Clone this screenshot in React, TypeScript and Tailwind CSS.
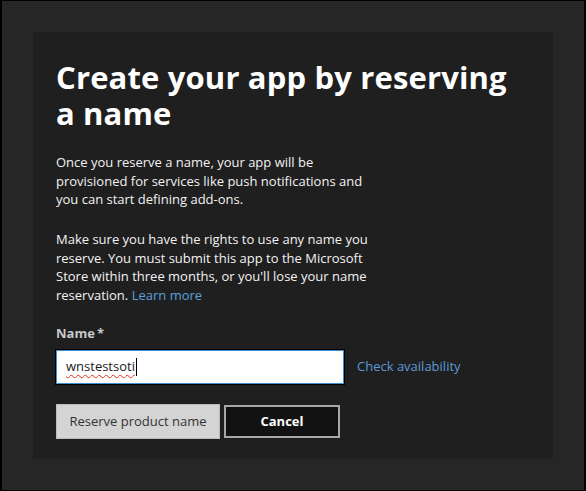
export default function App() {
  return (
    <div
      className="w-[586px] h-[491px] bg-[#262626] border-t border-b border-l-2 border-r-2 border-black"
      style={{ fontFamily: '"Open Sans", "Noto Sans", sans-serif' }}
    >
      <div className="ml-[31px] mt-[31px] w-[520px] h-[427px] bg-[#1f1f1f] pl-[23px] pt-[27px]">
        <h1 className="text-[31px] leading-[36px] font-bold text-white tracking-[0.15px]">
          Create your app by reserving
          <br />
          a name
        </h1>

        <p className="mt-[22px] text-[13px] leading-[18.5px] text-[#f2f2f2]">
          Once you reserve a name, your app will be
          <br />
          provisioned for services like push notifications and
          <br />
          you can start defining add-ons.
        </p>

        <p className="mt-[21.5px] text-[13px] leading-[18.5px] text-[#f2f2f2]">
          Make sure you have the rights to use any name you
          <br />
          reserve. You must submit this app to the Microsoft
          <br />
          Store within three months, or you'll lose your name
          <br />
          reservation.{" "}
          <a href="#" className="text-[#5aa0dc]">
            Learn more
          </a>
        </p>

        <div className="mt-[19px] text-[13px] leading-[20px] font-bold text-[#c8c8c8]">
          Name<span className="ml-[2px]">*</span>
        </div>

        <div className="mt-[7px] flex items-center">
          <div className="w-[288px] h-[34px] bg-white border border-[#3f8fd6] outline outline-1 outline-black flex items-center pl-[9px]">
            <span className="text-[13px] text-[#1a1a1a] underline decoration-wavy decoration-[#e0301e] decoration-1 underline-offset-[3px]">
              wnstestsoti
            </span>
            <span className="w-px h-[18px] bg-black ml-px" />
          </div>
          <a href="#" className="ml-[13px] text-[13px] text-[#5a9bd5]">
            Check availability
          </a>
        </div>

        <div className="mt-[20px] flex items-center gap-[4px]">
          <button className="w-[164px] h-[35px] bg-[#d4d4d4] border border-[#bcbcbc] text-[13px] text-[#333333]">
            Reserve product name
          </button>
          <button className="w-[116px] h-[33px] bg-[#121212] border-2 border-[#a8a8a8] text-[13px] font-bold text-white">
            Cancel
          </button>
        </div>
      </div>
    </div>
  );
}
